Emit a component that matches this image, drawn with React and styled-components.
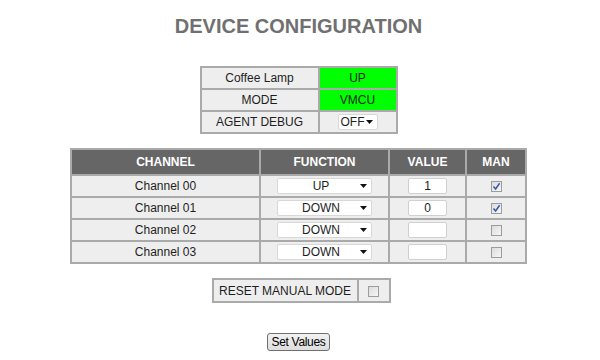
import React from 'react';
import styled, { createGlobalStyle } from 'styled-components';

const Global = createGlobalStyle`
  html, body { margin: 0; padding: 0; background: #ffffff; }
  body { font-family: "Liberation Sans", Arial, sans-serif; font-size: 12px; color: #222; }
`;

const Page = styled.div`
  width: 597px;
  padding-top: 14px;
  display: flex;
  flex-direction: column;
  align-items: center;
`;

const Title = styled.h1`
  margin: 0;
  font-size: 20px;
  line-height: 24px;
  font-weight: bold;
  color: #707070;
`;

const Grid = styled.table`
  border-collapse: collapse;
  table-layout: fixed;
  margin-top: ${p => p.$mt}px;
  margin-left: ${p => p.$ml || 0}px;
  border: 2px solid #aaaaaa;
`;

const Cell = styled.td`
  border: 2px solid #aaaaaa;
  height: ${p => p.$h || 20}px;
  width: ${p => p.$w}px;
  padding: 0;
  text-align: center;
  vertical-align: middle;
  background: ${p => (p.$green ? '#00ff00' : '#eeeeee')};
  font-size: 12px;
  color: #1e1e1e;
  line-height: 14px;
`;

const Head = styled.th`
  border: 2px solid #aaaaaa;
  background: #666666;
  color: #ffffff;
  font-weight: bold;
  font-size: 12px;
  height: 24px;
  width: ${p => p.$w}px;
  padding: 0;
`;

const SelectBox = styled.span`
  display: inline-flex;
  align-items: center;
  box-sizing: border-box;
  width: ${p => p.$w}px;
  height: 16px;
  background: #ffffff;
  border: 1px solid #d8d8d8;
  border-radius: 2px;
  vertical-align: middle;
  padding: 0 4px 0 ${p => (p.$left ? 2 : 4)}px;
`;

const SelectText = styled.span`
  flex: 1;
  text-align: ${p => (p.$left ? 'left' : 'center')};
  font-size: 12px;
  line-height: 14px;
  color: #1e1e1e;
`;

const TextBox = styled.input`
  box-sizing: border-box;
  width: 39px;
  height: 16px;
  border: 1px solid #d0d0d0;
  border-radius: 2px;
  background: #ffffff;
  text-align: center;
  font-family: "Liberation Sans", Arial, sans-serif;
  font-size: 12px;
  color: #1e1e1e;
  padding: 0;
  margin: 0;
  vertical-align: middle;
  outline: none;
`;

const Check = styled.span`
  display: inline-flex;
  align-items: center;
  justify-content: center;
  box-sizing: border-box;
  width: 11px;
  height: 11px;
  border: 1px solid #9c9c9c;
  background: linear-gradient(135deg, #dcdcdc 0%, #f6f6f6 100%);
  vertical-align: middle;
`;

const Button = styled.button`
  margin-top: ${p => p.$mt}px;
  height: 18px;
  padding: 0 3px;
  border: 1px solid #707070;
  border-radius: 3px;
  background: linear-gradient(#f2f2f2, #dddddd);
  font-family: "Liberation Sans", Arial, sans-serif;
  font-size: 12px;
  letter-spacing: -0.3px;
  color: #000;
  line-height: 14px;
`;

const Caret = () => (
  <svg width="7" height="4" viewBox="0 0 7 4"><path d="M0 0H7L3.5 4Z" fill="#111" /></svg>
);

const Select = ({ w, value, left }) => (
  <SelectBox $w={w} $left={left}>
    <SelectText $left={left}>{value}</SelectText>
    <Caret />
  </SelectBox>
);

const Checkbox = ({ checked }) => (
  <Check>
    {checked && (
      <svg width="9" height="9" viewBox="0 0 9 9">
        <path d="M1.5 4.5L3.6 7L7.6 1.2" stroke="#3a57a8" strokeWidth="1.5" fill="none" />
      </svg>
    )}
  </Check>
);

const channels = [
  { name: 'Channel 00', fn: 'UP', value: '1', man: true },
  { name: 'Channel 01', fn: 'DOWN', value: '0', man: true },
  { name: 'Channel 02', fn: 'DOWN', value: '', man: false },
  { name: 'Channel 03', fn: 'DOWN', value: '', man: false },
];

export default function App() {
  return (
    <>
      <Global />
      <Page>
        <Title>DEVICE CONFIGURATION</Title>

        <Grid $mt={28}>
          <tbody>
            <tr>
              <Cell $w={116}>Coffee Lamp</Cell>
              <Cell $w={76} $green>UP</Cell>
            </tr>
            <tr>
              <Cell>MODE</Cell>
              <Cell $green>VMCU</Cell>
            </tr>
            <tr>
              <Cell>AGENT DEBUG</Cell>
              <Cell><Select w={40} value="OFF" left /></Cell>
            </tr>
          </tbody>
        </Grid>

        <Grid $mt={14}>
          <thead>
            <tr>
              <Head $w={187}>CHANNEL</Head>
              <Head $w={127}>FUNCTION</Head>
              <Head $w={75}>VALUE</Head>
              <Head $w={58}>MAN</Head>
            </tr>
          </thead>
          <tbody>
            {channels.map(c => (
              <tr key={c.name}>
                <Cell>{c.name}</Cell>
                <Cell><Select w={95} value={c.fn} /></Cell>
                <Cell><TextBox defaultValue={c.value} readOnly /></Cell>
                <Cell><Checkbox checked={c.man} /></Cell>
              </tr>
            ))}
          </tbody>
        </Grid>

        <Grid $mt={14} $ml={5}>
          <tbody>
            <tr>
              <Cell $w={143} $h={21}>RESET MANUAL MODE</Cell>
              <Cell $w={30} $h={21}><Checkbox /></Cell>
            </tr>
          </tbody>
        </Grid>

        <Button $mt={30}>Set Values</Button>
      </Page>
    </>
  );
}
